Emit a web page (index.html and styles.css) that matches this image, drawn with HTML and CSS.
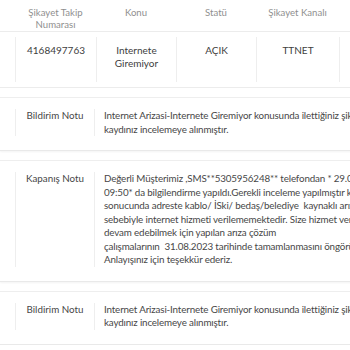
FILE: index.html
```html
<!DOCTYPE html>
<html lang="tr">
<head>
<meta charset="utf-8">
<title>Şikayet Detayı</title>
<link rel="stylesheet" href="styles.css">
</head>
<body>
<div class="page">
  <div class="thead">
    <div class="th">Şikayet Takip<br>Numarası</div>
    <div class="th">Konu</div>
    <div class="th">Statü</div>
    <div class="th">Şikayet Kanalı</div>
    <div class="th"></div>
  </div>
  <div class="trow">
    <div class="td">4168497763</div>
    <div class="td">Internete<br>Giremiyor</div>
    <div class="td">AÇIK</div>
    <div class="td">TTNET</div>
    <div class="td"></div>
  </div>

  <div class="note">
    <div class="label">Bildirim Notu</div>
    <div class="text">Internet Arizasi-Internete Giremiyor konusunda ilettiğiniz şikayet
kaydınız incelemeye alınmıştır.</div>
  </div>

  <div class="note">
    <div class="label">Kapanış Notu</div>
    <div class="text">Değerli Müşterimiz ,SMS**5305956248** telefondan * 29.08.2023
09:50* da bilgilendirme yapıldı.Gerekli inceleme yapılmıştır kontroller
sonucunda adreste kablo/ İSki/ bedaş/belediye  kaynaklı arıza
sebebiyle internet hizmeti verilememektedir. Size hizmet vermeye
devam edebilmek için yapılan arıza çözüm
çalışmalarının  31.08.2023 tarihinde tamamlanmasını öngörüyoruz.
Anlayışınız için teşekkür ederiz.</div>
  </div>

  <div class="note">
    <div class="label">Bildirim Notu</div>
    <div class="text">Internet Arizasi-Internete Giremiyor konusunda ilettiğiniz şikayet
kaydınız incelemeye alınmıştır.</div>
  </div>
</div>
</body>
</html>
```

FILE: styles.css
```css
html, body {
  margin: 0;
  padding: 0;
  overflow: hidden;
  background: #ffffff;
}

body {
  font-family: "Lato", "Noto Sans", "DejaVu Sans", sans-serif;
  color: #4a4a4a;
  width: 700px;
}

.thead {
  display: grid;
  grid-template-columns: 81px 80px 80px 83px 1fr;
  padding-left: 15px;
  height: 31px;
  border-bottom: 1px solid #ececec;
  font-size: 9.6px;
  line-height: 12px;
  color: #8f8f8f;
  text-align: center;
}

.th {
  padding-top: 7px;
}

.trow {
  display: grid;
  grid-template-columns: 81px 80px 80px 83px 1fr;
  padding: 5px 0 5px 15px;
  border-bottom: 1px solid #ececec;
  font-size: 10px;
  line-height: 13px;
  color: #404040;
  text-align: center;
}

.td {
  border-left: 1px solid #eeeeee;
  padding: 7px 4px 12px;
}

.note {
  display: flex;
  margin-top: 9px;
  padding: 11px 0 14px 15px;
  border-top: 1px solid #eeeeee;
  border-bottom: 1px solid #e9e9e9;
  box-shadow: 0 1px 2px rgba(0, 0, 0, 0.05);
  font-size: 9.8px;
  line-height: 13.5px;
  color: #474747;
}

.label {
  width: 78px;
  flex: none;
  border-left: 1px solid #eeeeee;
  text-align: center;
}

.text {
  border-left: 1px solid #eeeeee;
  padding-left: 9px;
  white-space: pre;
  letter-spacing: -0.15px;
}
```
